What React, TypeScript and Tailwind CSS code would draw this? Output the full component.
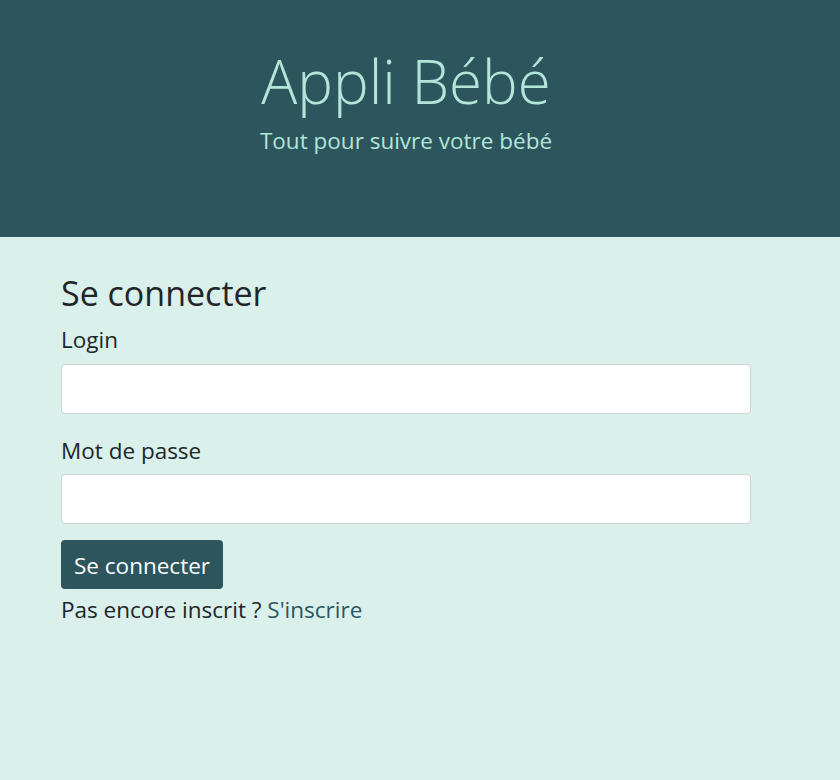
import React from "react";

export default function App() {
  const font = { fontFamily: '"Segoe UI", "Open Sans", "Noto Sans", sans-serif' };
  return (
    <div className="min-h-[780px] bg-[#daf0ea] text-[#212529]" style={font}>
      <header className="h-[237px] bg-[#2c555e] pt-[45px]">
        <div className="w-[720px] px-[15px] text-center text-[#b3e5d8]" style={{ marginLeft: 46 }}>
          <h1 className="text-[60px] font-light leading-[1.2]">Appli Bébé</h1>
          <p className="mt-[7px] text-[22.5px] leading-[1.5]">Tout pour suivre votre bébé</p>
        </div>
      </header>
      <main className="w-[720px] px-[15px] pt-[36px]" style={{ marginLeft: 46 }}>
        <h2 className="text-[34px] leading-[1.2] font-normal">Se connecter</h2>
        <div className="mt-[9px]">
          <label className="block text-[22.5px] leading-[1.5]">Login</label>
          <input type="text" className="mt-[7px] block h-[50px] w-full rounded-[4px] border border-[#ced4da] bg-white px-3" />
        </div>
        <div className="mt-[20px]">
          <label className="block text-[22.5px] leading-[1.5]">Mot de passe</label>
          <input type="password" className="mt-[7px] block h-[50px] w-full rounded-[4px] border border-[#ced4da] bg-white px-3" />
        </div>
        <button className="mt-[16px] h-[49px] rounded-[4px] bg-[#2c555e] px-[13px] pt-[2px] text-[22.5px] text-white">Se connecter</button>
        <p className="mt-[4px] text-[22.5px] leading-[1.5]">
          Pas encore inscrit ? <a className="text-[#2c555e]" href="#">S'inscrire</a>
        </p>
      </main>
    </div>
  );
}
